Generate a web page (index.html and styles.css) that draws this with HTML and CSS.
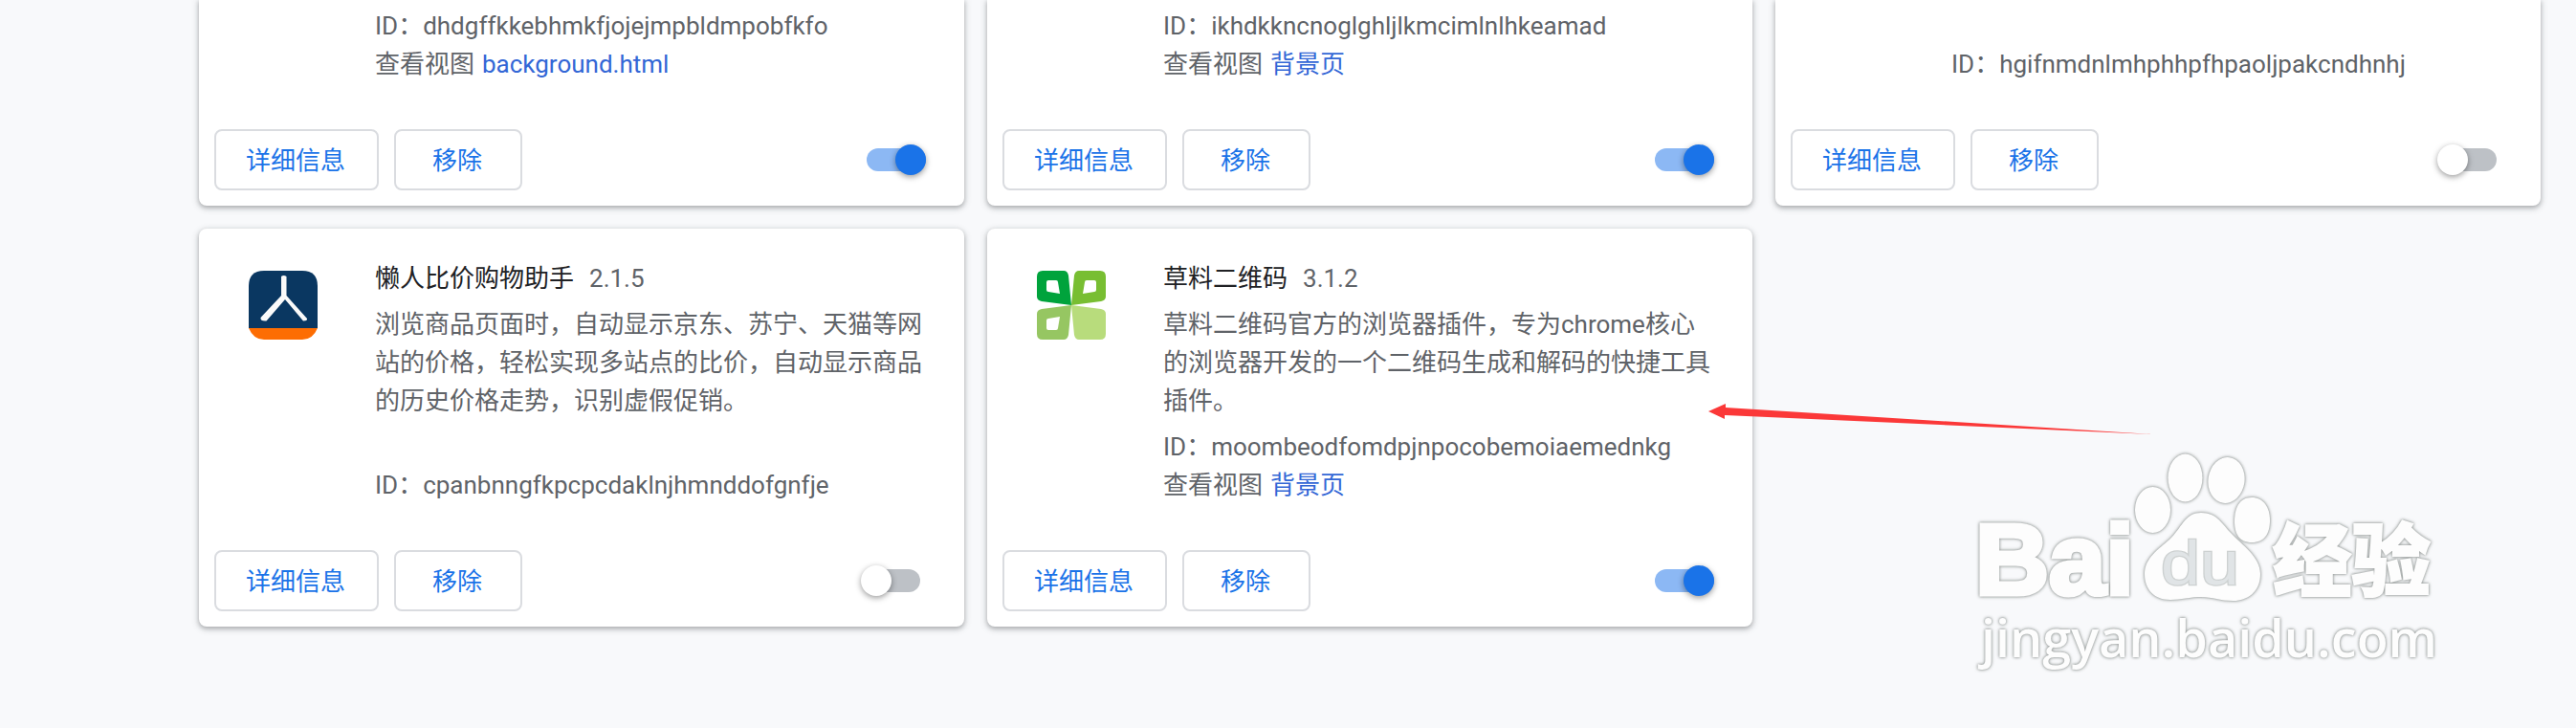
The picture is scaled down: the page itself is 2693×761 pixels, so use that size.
FILE: index.html
```
<!DOCTYPE html>
<html lang="zh-CN">
<head>
<meta charset="utf-8">
<title>扩展程序</title>
<link rel="stylesheet" href="styles.css">
</head>
<body>
<main class="grid">
  <section class="card card-cut">
    <div class="main"><div class="info"><div class="meta"><p>ID：dhdgffkkebhmkfjojejmpbldmpobfkfo</p><p>查看视图 <a class="link">background.html</a></p></div></div></div>
    <div class="actions"><button class="btn">详细信息</button><button class="btn btn-remove">移除</button><span class="toggle on"><i class="knob"></i></span></div>
  </section>
  <section class="card card-cut">
    <div class="main"><div class="info"><div class="meta"><p>ID：ikhdkkncnoglghljlkmcimlnlhkeamad</p><p>查看视图 <a class="link">背景页</a></p></div></div></div>
    <div class="actions"><button class="btn">详细信息</button><button class="btn btn-remove">移除</button><span class="toggle on"><i class="knob"></i></span></div>
  </section>
  <section class="card card-cut">
    <div class="main"><div class="info"><div class="meta"><p>ID：hgifnmdnlmhphhpfhpaoljpakcndhnhj</p></div></div></div>
    <div class="actions"><button class="btn">详细信息</button><button class="btn btn-remove">移除</button><span class="toggle"><i class="knob"></i></span></div>
  </section>
  <section class="card">
    <div class="main">
      <svg class="icon" viewBox="0 0 72 72">
        <path fill="#0a3761" d="M0 60V16Q0 0 16 0H56Q72 0 72 16V60Z"/>
        <path fill="#fd6d03" d="M0 60H72Q67 72 56 72H16Q5 72 0 60Z"/>
        <path fill="#fafafa" d="M34 6Q36.500 4 39.500 6V26L61 50Q61.500 52.500 57 52.500L38 30L18.500 52.500Q12 53 12.500 49L34 26Z"/>
      </svg>
      <div class="info">
        <h2 class="title">懒人比价购物助手<span class="version">2.1.5</span></h2>
        <p>浏览商品页面时，自动显示京东、苏宁、天猫等网<br>站的价格，轻松实现多站点的比价，自动显示商品<br>的历史价格走势，识别虚假促销。</p>
        <div class="meta"><p>ID：cpanbnngfkpcpcdaklnjhmnddofgnfje</p></div>
      </div>
    </div>
    <div class="actions"><button class="btn">详细信息</button><button class="btn btn-remove">移除</button><span class="toggle"><i class="knob"></i></span></div>
  </section>
  <section class="card">
    <div class="main">
      <svg class="icon" viewBox="0 0 72 72" fill-rule="evenodd">
        <path fill="#00a33c" d="M6 0H28Q32 0 33 5L36 36L5 32Q0 31 0 27V6Q0 0 6 0ZM12 10Q10 10 10 12V20Q10 22 12 22L24 24L22 12Q22 10 20 10Z"/>
        <path fill="#78be32" d="M44 0H66Q72 0 72 6V27Q72 31 67 32L36 36L39 5Q40 0 44 0ZM52 10Q50 10 50 12L48 24L60 22Q62 22 62 20V12Q62 10 60 10Z"/>
        <path fill="#96c662" d="M36 36L33 67Q32 72 28 72H6Q0 72 0 66V45Q0 41 5 40ZM24 48L12 50Q10 50 10 52V60Q10 62 12 62H20Q22 62 22 60Z"/>
        <path fill="#b8dc7c" d="M36 36L67 40Q72 41 72 45V66Q72 72 66 72H44Q40 72 39 67Z"/>
      </svg>
      <div class="info">
        <h2 class="title">草料二维码<span class="version">3.1.2</span></h2>
        <p>草料二维码官方的浏览器插件，专为chrome核心<br>的浏览器开发的一个二维码生成和解码的快捷工具<br>插件。</p>
        <div class="meta"><p>ID：moombeodfomdpjnpocobemoiaemednkg</p><p>查看视图 <a class="link">背景页</a></p></div>
      </div>
    </div>
    <div class="actions"><button class="btn">详细信息</button><button class="btn btn-remove">移除</button><span class="toggle on"><i class="knob"></i></span></div>
  </section>
</main>
<svg class="arrow" viewBox="1780 415 480 45"><path fill="#fb3838" d="M1786 430L1804 422V426L2250 454L1803 434V438Z"/></svg>
<svg class="watermark" viewBox="2050 460 520 260">
  <g class="mark">
    <text class="latin" x="2065" y="621" font-size="104" textLength="166" lengthAdjust="spacingAndGlyphs">Bai</text>
    <ellipse cx="2250.500" cy="533" rx="18.500" ry="24"/>
    <ellipse cx="2284.500" cy="499.500" rx="18" ry="25"/>
    <ellipse cx="2327.500" cy="502" rx="19" ry="24" transform="rotate(8 2327.500 502)"/>
    <path d="M2354 520C2366 520 2373 530 2373 544C2373 558 2367 567 2354 567C2341 567 2336 558 2336 545C2336 531 2341 520 2354 520Z"/>
    <path d="M2301 536C2318 536 2323 548 2333 558C2344 570 2363 582 2363 600C2363 619 2349 628 2335 628C2320 628 2314 624 2301 624C2289 624 2281 627 2269 627C2252 627 2242 616 2242 600C2242 583 2257 574 2268 564C2281 552 2284 536 2301 536Z"/>
    <text class="han" x="2376" y="616" font-size="82" textLength="165" lengthAdjust="spacingAndGlyphs">经验</text>
    <text class="site" x="2071" y="687" font-size="54" textLength="477" lengthAdjust="spacingAndGlyphs">jingyan.baidu.com</text>
  </g>
  <text class="du" x="2259" y="611" font-size="65" textLength="82" lengthAdjust="spacingAndGlyphs">du</text>
</svg>
</body>
</html>
```
FILE: styles.css
```
* { box-sizing: border-box; }
body {
  margin: 0;
  height: 761px;
  position: relative;
  overflow: hidden;
  background: #f8f9fb;
  color: #5f6368;
  font: 26px/40px Roboto, "Noto Sans CJK SC", sans-serif;
}
p, h2 { margin: 0; }
.grid {
  display: grid;
  grid-template-columns: repeat(3, 800px);
  grid-template-rows: 215px 416px;
  gap: 24px;
  padding-left: 208px;
}
.card {
  display: flex;
  flex-direction: column;
  padding: 32px 16px 16px;
  background: #fff;
  border-radius: 8px;
  box-shadow: 0 2px 4px rgba(60, 64, 67, .3), 0 2px 6px 2px rgba(60, 64, 67, .15);
}
.card-cut { padding-top: 0; border-radius: 0 0 8px 8px; }
.main { flex: 1; display: flex; padding: 0 24px 0 36px; }
.icon { width: 72px; height: 72px; margin-top: 12px; flex: none; }
.info { flex: 1; margin-left: 60px; display: flex; flex-direction: column; white-space: nowrap; }
.card-cut .info { margin-left: 132px; }
.title { font-size: 26px; font-weight: 400; color: #202124; margin-bottom: 8px; }
.version { margin-left: 16px; color: #5f6368; }
.meta { margin-top: auto; }
.link { margin-left: 1.5px; color: #3367d6; }
.actions { display: flex; align-items: center; gap: 16px; margin-top: 48px; }
.btn {
  height: 64px;
  padding: 2px 33px 0 31px;
  border: 2px solid #dadce0;
  border-radius: 8px;
  background: #fff;
  color: #1a73e8;
  font: inherit;
}
.btn-remove { padding: 2px 40px 0 38px; }
.toggle {
  display: flex;
  align-items: center;
  width: 62px;
  height: 24px;
  margin: 0 30px 0 auto;
  border-radius: 12px;
  background: linear-gradient(90deg, transparent 12px, #bdc1c6 12px);
}
.toggle.on { justify-content: flex-end; margin-right: 24px; background: #8cb8f4; }
.knob {
  width: 32px;
  height: 32px;
  flex: none;
  border-radius: 50%;
  background: #fff;
  box-shadow: 0 2px 6px rgba(0, 0, 0, .4);
}
.on .knob { background: #1a73e8; }
.arrow { position: absolute; left: 1780px; top: 415px; width: 480px; height: 45px; }
.watermark { position: absolute; left: 2050px; top: 460px; width: 520px; height: 260px; }
.mark {
  fill: #fdfdfd;
  filter: drop-shadow(0 0 1.5px #8f9493) drop-shadow(0 0 1.5px #c4c8c7);
}
.latin { font-family: "Liberation Sans", sans-serif; font-weight: 700; stroke: #fdfdfd; stroke-width: 5px; }
.du { font-family: "Liberation Sans", sans-serif; fill: #e0e4e6; stroke: #cdd1d1; stroke-width: 2.5px; paint-order: stroke; }
.han { font-family: "Noto Sans CJK SC", sans-serif; font-weight: 900; stroke: #fdfdfd; stroke-width: 2px; }
.site { font-family: "Open Sans", sans-serif; font-weight: 600; }
```
